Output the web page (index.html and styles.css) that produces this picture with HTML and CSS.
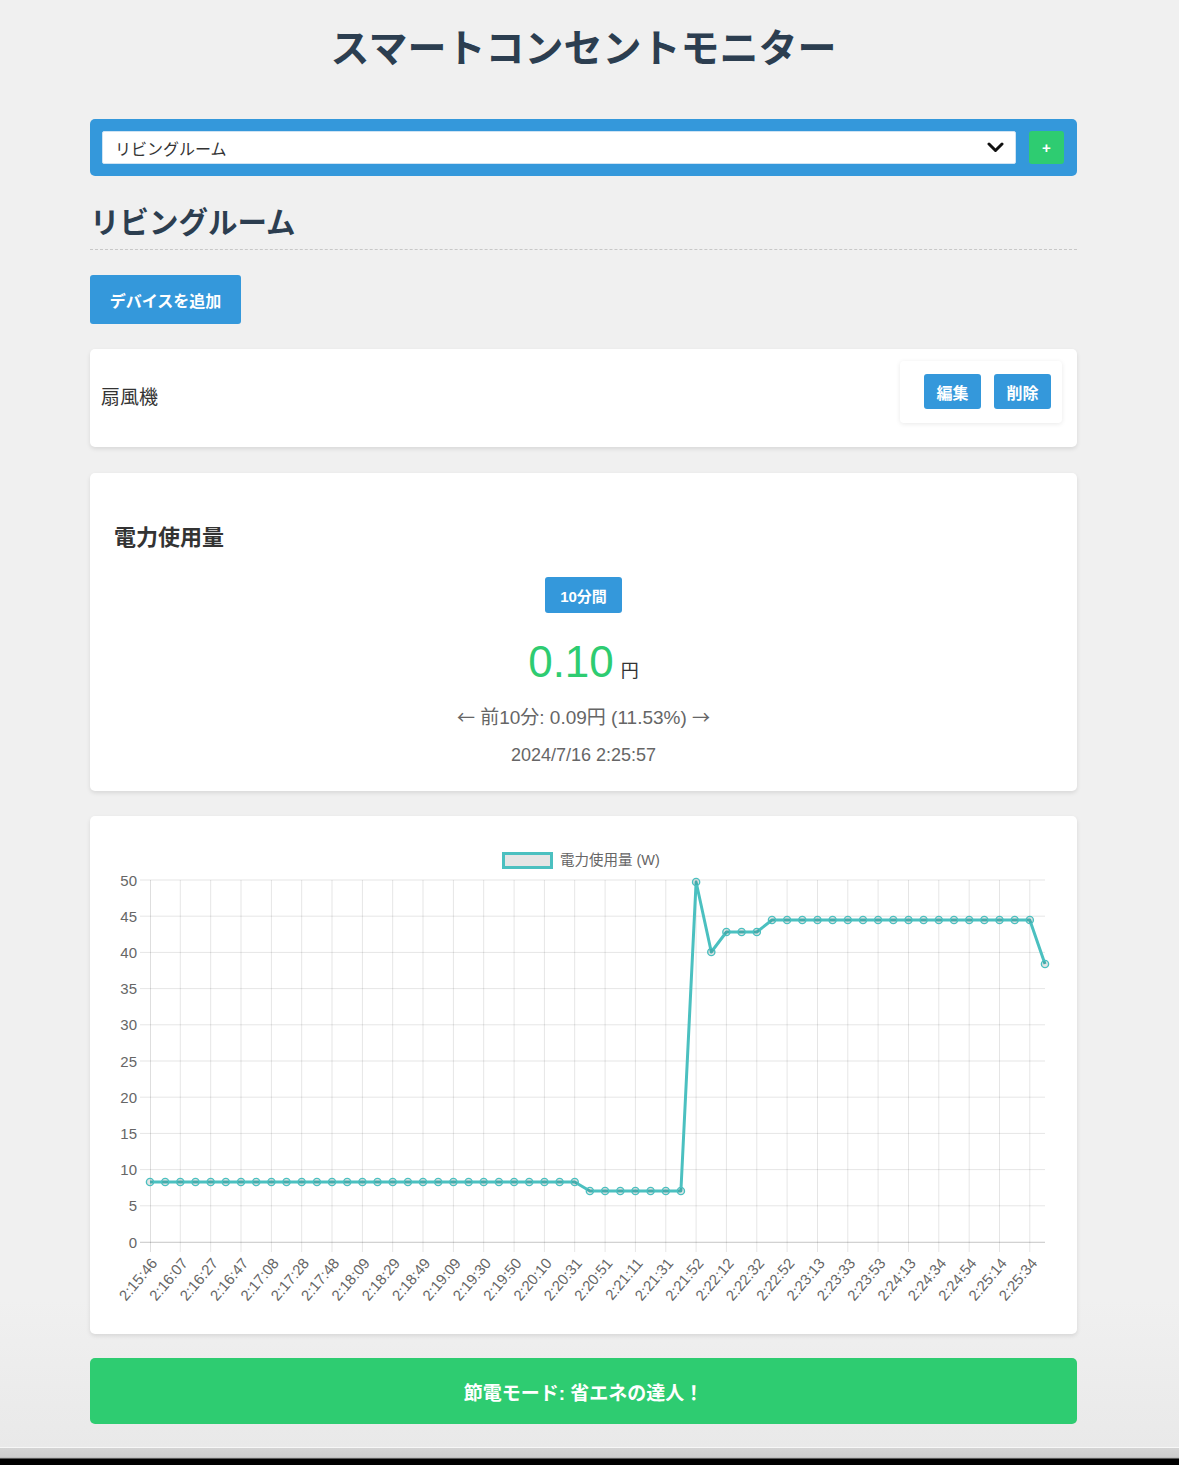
FILE: index.html
```html
<!DOCTYPE html>
<html lang="ja">
<head>
<meta charset="utf-8">
<title>スマートコンセントモニター</title>
<link rel="stylesheet" href="styles.css">
</head>
<body>
<div class="page">
  <div class="main">
    <h1 class="title">スマートコンセントモニター</h1>
    <div class="container">
      <div class="room-bar">
        <div class="room-select">
          <span>リビングルーム</span>
          <svg class="chevron" width="17" height="11" viewBox="0 0 17 11"><path d="M2 2 L8.5 8.5 L15 2" fill="none" stroke="#111" stroke-width="3" stroke-linecap="round" stroke-linejoin="round"/></svg>
        </div>
        <button class="add-room">+</button>
      </div>

      <h2 class="room-name">リビングルーム</h2>

      <button class="btn btn-add">デバイスを追加</button>

      <div class="card device">
        <span class="device-name">扇風機</span>
        <div class="device-actions">
          <button class="btn btn-sm">編集</button>
          <button class="btn btn-sm">削除</button>
        </div>
      </div>

      <div class="card usage">
        <h3 class="usage-title">電力使用量</h3>
        <button class="btn period">10分間</button>
        <div class="cost"><span class="cost-value">0.10</span><span class="cost-unit">円</span></div>
        <div class="compare"><span class="arrow">←</span> 前10分: 0.09円 (11.53%) <span class="arrow">→</span></div>
        <div class="stamp">2024/7/16 2:25:57</div>
      </div>

      <div class="card chart-card">
        <svg class="chart" width="987" height="518" viewBox="0 0 987 518">
          <defs>
            <marker id="pt" markerWidth="12" markerHeight="12" refX="6" refY="6" markerUnits="userSpaceOnUse">
              <circle cx="6" cy="6" r="3.6" fill="rgba(0,0,0,0.1)" stroke="rgb(75,192,192)" stroke-width="1.4"/>
            </marker>
          </defs>
          <rect x="413.5" y="37.5" width="48" height="14" fill="rgba(0,0,0,0.1)" stroke="rgb(75,192,192)" stroke-width="3"/>
          <text class="legend" x="470" y="44" dominant-baseline="central">電力使用量 (W)</text>

          <path class="grid" d="M50 426H955M50 389.8H955M50 353.6H955M50 317.4H955M50 281.2H955M50 245H955M50 208.8H955M50 172.6H955M50 136.4H955M50 100.2H955M50 64H955"/>
          <path class="grid" d="M90.3 64V436M120.7 64V436M151 64V436M181.4 64V436M211.7 64V436M242 64V436M272.4 64V436M302.7 64V436M333 64V436M363.4 64V436M393.7 64V436M424.1 64V436M454.4 64V436M484.7 64V436M515.1 64V436M545.4 64V436M575.8 64V436M606.1 64V436M636.4 64V436M666.8 64V436M697.1 64V436M727.5 64V436M757.8 64V436M788.1 64V436M818.5 64V436M848.8 64V436M879.2 64V436M909.5 64V436M939.8 64V436"/>
          <path class="axis" d="M60.5 64V436M50 426.5H955"/>

          <g class="yticks">
            <text x="47" y="64" text-anchor="end" dominant-baseline="central">50</text>
            <text x="47" y="100.2" text-anchor="end" dominant-baseline="central">45</text>
            <text x="47" y="136.4" text-anchor="end" dominant-baseline="central">40</text>
            <text x="47" y="172.6" text-anchor="end" dominant-baseline="central">35</text>
            <text x="47" y="208.8" text-anchor="end" dominant-baseline="central">30</text>
            <text x="47" y="245" text-anchor="end" dominant-baseline="central">25</text>
            <text x="47" y="281.2" text-anchor="end" dominant-baseline="central">20</text>
            <text x="47" y="317.4" text-anchor="end" dominant-baseline="central">15</text>
            <text x="47" y="353.6" text-anchor="end" dominant-baseline="central">10</text>
            <text x="47" y="389.8" text-anchor="end" dominant-baseline="central">5</text>
            <text x="47" y="426" text-anchor="end" dominant-baseline="central">0</text>
          </g>

          <g class="xticks">
            <text transform="translate(64,444) rotate(-50)" text-anchor="end" dominant-baseline="central">2:15:46</text>
            <text transform="translate(94.3,444) rotate(-50)" text-anchor="end" dominant-baseline="central">2:16:07</text>
            <text transform="translate(124.7,444) rotate(-50)" text-anchor="end" dominant-baseline="central">2:16:27</text>
            <text transform="translate(155,444) rotate(-50)" text-anchor="end" dominant-baseline="central">2:16:47</text>
            <text transform="translate(185.4,444) rotate(-50)" text-anchor="end" dominant-baseline="central">2:17:08</text>
            <text transform="translate(215.7,444) rotate(-50)" text-anchor="end" dominant-baseline="central">2:17:28</text>
            <text transform="translate(246,444) rotate(-50)" text-anchor="end" dominant-baseline="central">2:17:48</text>
            <text transform="translate(276.4,444) rotate(-50)" text-anchor="end" dominant-baseline="central">2:18:09</text>
            <text transform="translate(306.7,444) rotate(-50)" text-anchor="end" dominant-baseline="central">2:18:29</text>
            <text transform="translate(337,444) rotate(-50)" text-anchor="end" dominant-baseline="central">2:18:49</text>
            <text transform="translate(367.4,444) rotate(-50)" text-anchor="end" dominant-baseline="central">2:19:09</text>
            <text transform="translate(397.7,444) rotate(-50)" text-anchor="end" dominant-baseline="central">2:19:30</text>
            <text transform="translate(428.1,444) rotate(-50)" text-anchor="end" dominant-baseline="central">2:19:50</text>
            <text transform="translate(458.4,444) rotate(-50)" text-anchor="end" dominant-baseline="central">2:20:10</text>
            <text transform="translate(488.7,444) rotate(-50)" text-anchor="end" dominant-baseline="central">2:20:31</text>
            <text transform="translate(519.1,444) rotate(-50)" text-anchor="end" dominant-baseline="central">2:20:51</text>
            <text transform="translate(549.4,444) rotate(-50)" text-anchor="end" dominant-baseline="central">2:21:11</text>
            <text transform="translate(579.8,444) rotate(-50)" text-anchor="end" dominant-baseline="central">2:21:31</text>
            <text transform="translate(610.1,444) rotate(-50)" text-anchor="end" dominant-baseline="central">2:21:52</text>
            <text transform="translate(640.4,444) rotate(-50)" text-anchor="end" dominant-baseline="central">2:22:12</text>
            <text transform="translate(670.8,444) rotate(-50)" text-anchor="end" dominant-baseline="central">2:22:32</text>
            <text transform="translate(701.1,444) rotate(-50)" text-anchor="end" dominant-baseline="central">2:22:52</text>
            <text transform="translate(731.5,444) rotate(-50)" text-anchor="end" dominant-baseline="central">2:23:13</text>
            <text transform="translate(761.8,444) rotate(-50)" text-anchor="end" dominant-baseline="central">2:23:33</text>
            <text transform="translate(792.1,444) rotate(-50)" text-anchor="end" dominant-baseline="central">2:23:53</text>
            <text transform="translate(822.5,444) rotate(-50)" text-anchor="end" dominant-baseline="central">2:24:13</text>
            <text transform="translate(852.8,444) rotate(-50)" text-anchor="end" dominant-baseline="central">2:24:34</text>
            <text transform="translate(883.2,444) rotate(-50)" text-anchor="end" dominant-baseline="central">2:24:54</text>
            <text transform="translate(913.5,444) rotate(-50)" text-anchor="end" dominant-baseline="central">2:25:14</text>
            <text transform="translate(943.8,444) rotate(-50)" text-anchor="end" dominant-baseline="central">2:25:34</text>
          </g>

          <polyline class="series" marker-start="url(#pt)" marker-mid="url(#pt)" marker-end="url(#pt)" points="60,366 75.2,366 90.3,366 105.5,366 120.7,366 135.8,366 151,366 166.2,366 181.4,366 196.5,366 211.7,366 226.9,366 242,366 257.2,366 272.4,366 287.5,366 302.7,366 317.9,366 333,366 348.2,366 363.4,366 378.6,366 393.7,366 408.9,366 424.1,366 439.2,366 454.4,366 469.6,366 484.7,366 499.9,375 515.1,375 530.3,375 545.4,375 560.6,375 575.8,375 590.9,375 606.1,66 621.3,136 636.4,116 651.6,116 666.8,116 682,104 697.1,104 712.3,104 727.5,104 742.6,104 757.8,104 773,104 788.1,104 803.3,104 818.5,104 833.6,104 848.8,104 864,104 879.2,104 894.3,104 909.5,104 924.7,104 939.8,104 955,148"/>
        </svg>
      </div>

      <button class="eco">節電モード: 省エネの達人！</button>
    </div>
  </div>
  <div class="edge"></div>
</div>
</body>
</html>
```

FILE: styles.css
```css
* {
  box-sizing: border-box;
}

html, body {
  margin: 0;
  padding: 0;
  overflow: hidden;
}

body {
  background: #f0f0f0;
  font-family: "Liberation Sans", "Noto Sans CJK JP", sans-serif;
  color: #333;
}

.page {
  width: 1179px;
  height: 1465px;
  display: flex;
  flex-direction: column;
  background: linear-gradient(to bottom, #f0f0f0 0, #f0f0f0 1300px, #e9e9e9 1447px);
}

.main {
  width: 1167px;
}

.title {
  margin: 0;
  padding-top: 22px;
  font-size: 39px;
  line-height: 47px;
  font-weight: 700;
  text-align: center;
  color: #2c3e50;
  font-family: "Noto Sans CJK JP", sans-serif;
}

.container {
  width: 987px;
  margin: 50px auto 0;
}

.room-bar {
  display: flex;
  align-items: stretch;
  gap: 13px;
  background: #3498db;
  border-radius: 5px;
  padding: 12px 13px 12px 12px;
  height: 57px;
}

.room-select {
  flex: 1;
  background: #fff;
  border: 1px solid #cfe3f3;
  border-radius: 2px;
  display: flex;
  align-items: center;
  justify-content: space-between;
  padding: 0 11px 0 12px;
  font-size: 16px;
  color: #333;
  font-family: "Noto Sans CJK JP", sans-serif;
}

.chevron {
  display: block;
}

.add-room {
  width: 35px;
  border: 0;
  border-radius: 3px;
  background: #2ecc71;
  color: #fff;
  font-weight: 700;
  font-size: 15px;
  font-family: "Liberation Sans", sans-serif;
  padding: 0;
}

.room-name {
  margin: 25px 0 0;
  padding-bottom: 9px;
  font-size: 29.5px;
  line-height: 39px;
  font-weight: 700;
  color: #2c3e50;
  border-bottom: 1px dashed #c8c8c8;
  font-family: "Noto Sans CJK JP", sans-serif;
}

.btn {
  border: 0;
  background: #3498db;
  color: #fff;
  font-weight: 700;
  font-family: "Liberation Sans", "Noto Sans CJK JP", sans-serif;
  border-radius: 3px;
  padding: 0;
}

.btn-add {
  display: block;
  margin-top: 25px;
  width: 151px;
  height: 49px;
  font-size: 16px;
}

.card {
  background: #fff;
  border-radius: 5px;
  box-shadow: 0 2px 4px rgba(0, 0, 0, 0.1);
}

.device {
  margin-top: 25px;
  height: 98px;
  display: flex;
  justify-content: space-between;
  padding: 0 15px 0 11px;
}

.device-name {
  align-self: center;
  margin-bottom: 5px;
  font-size: 19px;
  color: #333;
  font-family: "Noto Sans CJK JP", sans-serif;
}

.device-actions {
  align-self: flex-start;
  margin-top: 12px;
  display: flex;
  gap: 13px;
  padding: 13px 11px 14px 24px;
  background: #fff;
  border-radius: 4px;
  box-shadow: 0 1px 5px rgba(0, 0, 0, 0.09);
}

.btn-sm {
  width: 57px;
  height: 35px;
  font-size: 16px;
}

.usage {
  margin-top: 26px;
  height: 318px;
  padding: 48px 24px 0;
  text-align: center;
}

.usage-title {
  margin: 0;
  text-align: left;
  font-size: 22px;
  line-height: 28px;
  font-weight: 700;
  color: #333;
  font-family: "Noto Sans CJK JP", sans-serif;
}

.period {
  display: block;
  margin: 28px auto 0;
  width: 77px;
  height: 36px;
  font-size: 15px;
}

.cost {
  margin-top: 22px;
  line-height: 53px;
  height: 53px;
}

.cost-value {
  font-size: 44px;
  color: #2ecc71;
}

.cost-unit {
  font-size: 18px;
  margin-left: 7px;
  color: #333;
}

.compare {
  margin-top: 14px;
  font-size: 19px;
  line-height: 28px;
  color: #666;
}

.arrow {
  font-family: "Noto Sans CJK JP", sans-serif;
  font-size: 18px;
}

.stamp {
  margin-top: 10px;
  font-size: 18px;
  line-height: 27px;
  color: #666;
}

.chart-card {
  margin-top: 25px;
  height: 518px;
}

.chart {
  display: block;
}

.chart text {
  font-family: "Liberation Sans", "Noto Sans CJK JP", sans-serif;
  font-size: 15px;
  fill: #666;
}

.chart .legend {
  font-size: 14.5px;
}

.grid {
  stroke: rgba(0, 0, 0, 0.1);
  stroke-width: 1;
  fill: none;
}

.axis {
  stroke: rgba(0, 0, 0, 0.13);
  stroke-width: 1;
  fill: none;
}

.series {
  fill: none;
  stroke: rgb(75, 192, 192);
  stroke-width: 3;
  stroke-linejoin: round;
}

.eco {
  display: block;
  width: 100%;
  margin-top: 24px;
  height: 66px;
  border: 0;
  border-radius: 5px;
  background: #2ecc71;
  color: #fff;
  font-size: 19px;
  font-weight: 700;
  font-family: "Liberation Sans", "Noto Sans CJK JP", sans-serif;
}

.edge {
  margin-top: auto;
  height: 18px;
  background: linear-gradient(to bottom, #f7f7f7 0, #f7f7f7 1px, #d4d4d4 1px, #cdcdcd 10px, #b0b0b0 11px, #000 12px);
}
```
